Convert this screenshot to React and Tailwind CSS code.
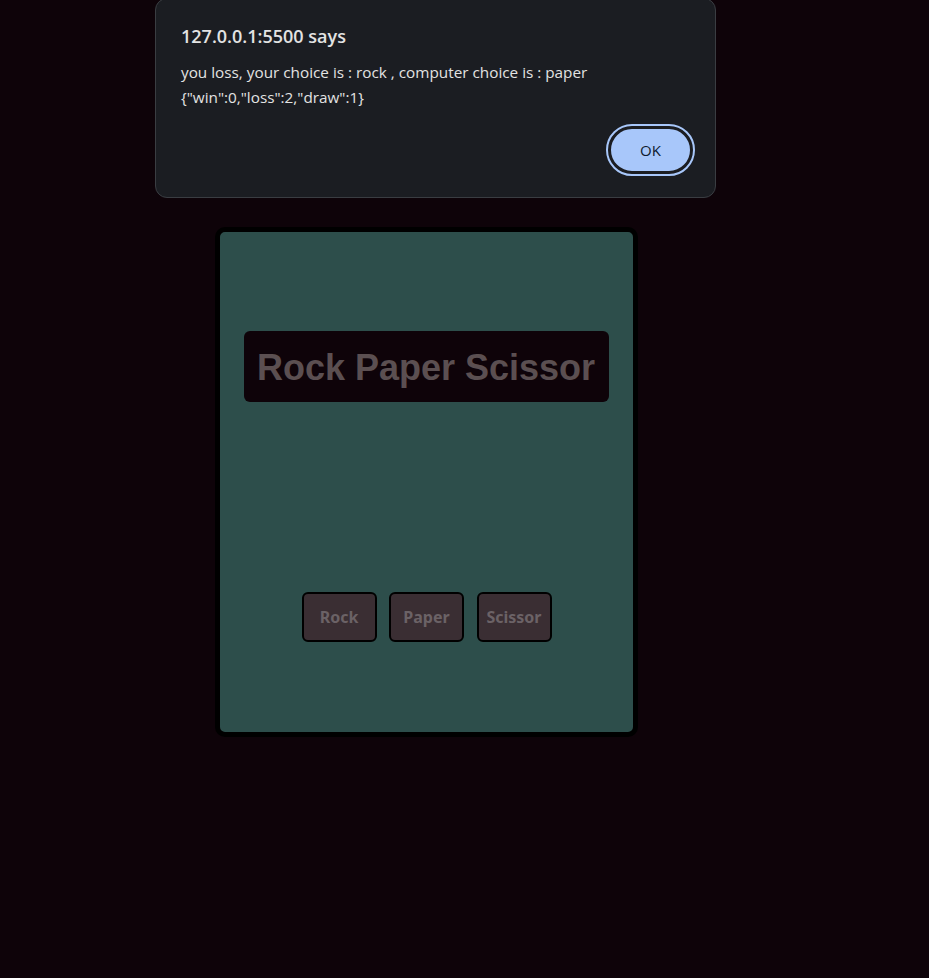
import { useState } from "react";

const choices = ["Rock", "Paper", "Scissor"];

const AlertBox = ({ onClose }) => (
  <div className="absolute left-[155px] top-[-2px] w-[561px] h-[200px] rounded-xl bg-[#1b1d22] border border-[#3a3d42] px-[25px] pt-[25px] font-['Open_Sans',sans-serif] text-[#e3e3e3]">
    <h2 className="text-[18px] font-semibold leading-[24px]">127.0.0.1:5500 says</h2>
    <p className="mt-[12px] text-[15.3px] leading-[25px]">
      you loss, your choice is : rock , computer choice is : paper
      <br />
      {'{"win":0,"loss":2,"draw":1}'}
    </p>
    <div className="flex justify-end mt-[16px]">
      <button
        onClick={onClose}
        className="mr-[-3px] w-[85px] h-[48px] rounded-full bg-[#a8c7fa] border-[3px] border-[#1b1d22] outline-2 outline-[#a8c7fa] text-[15px] font-medium text-[#0e1b2e]"
      >
        OK
      </button>
    </div>
  </div>
);

export default function App() {
  const [open, setOpen] = useState(true);

  return (
    <div className="relative min-h-[978px] w-full bg-[#0e0309]">
      <div className="pt-[227px] pl-[215px]">
        <div className="w-[423px] h-[510px] border-[5px] border-black rounded-[10px] bg-[#2d4e4b] flex flex-col items-center pt-[99px]">
          <h1 className="w-[365px] h-[71px] ml-[-1px] pt-[3px] flex items-center justify-center rounded-md bg-[#0e0309] font-['Liberation_Sans',Arial,sans-serif] font-bold text-[36px] text-[#5b4f51]">
            Rock Paper Scissor
          </h1>
          <div className="flex gap-[12.5px] mt-[190px]">
            {choices.map((c) => (
              <button
                key={c}
                className="w-[75px] h-[50px] rounded-md border-2 border-black bg-[#3a2e33] font-['Noto_Sans',sans-serif] font-bold text-[16px] text-[#6b6266]"
              >
                {c}
              </button>
            ))}
          </div>
        </div>
      </div>
      {open && <AlertBox onClose={() => setOpen(false)} />}
    </div>
  );
}
